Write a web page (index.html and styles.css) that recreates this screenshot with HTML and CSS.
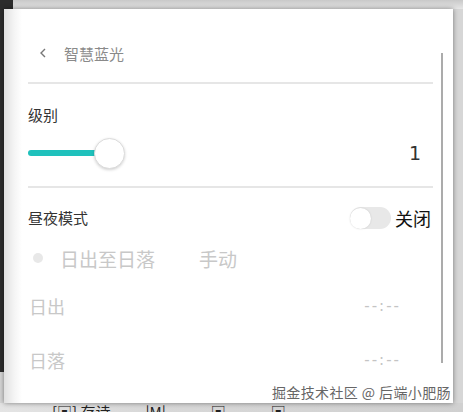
FILE: index.html
```html
<!DOCTYPE html>
<html lang="zh-CN">
<head>
<meta charset="utf-8">
<title>智慧蓝光</title>
<link rel="stylesheet" href="styles.css">
</head>
<body>
<div class="card">
  <div class="main">
    <div class="header">
      <svg class="back" width="8" height="10" viewBox="0 0 8 10"><path d="M6 1 L2 5 L6 9" fill="none" stroke="#777" stroke-width="1.4"/></svg>
      <span class="title">智慧蓝光</span>
    </div>
    <div class="divider"></div>
    <div class="label level">级别</div>
    <div class="slider-row">
      <div class="slider">
        <div class="fill"></div>
        <div class="knob"></div>
      </div>
      <span class="value">1</span>
    </div>
    <div class="divider second"></div>
    <div class="mode-row">
      <span class="label">昼夜模式</span>
      <div class="switch-wrap">
        <div class="switch"><div class="switch-knob"></div></div>
        <span class="switch-text">关闭</span>
      </div>
    </div>
    <div class="radio-row">
      <span class="dot"></span>
      <span class="radio-label">日出至日落</span>
      <span class="radio-label manual">手动</span>
    </div>
    <div class="time-row">
      <span class="time-label">日出</span>
      <span class="time-value">--:--</span>
    </div>
    <div class="time-row sunset">
      <span class="time-label">日落</span>
      <span class="time-value">--:--</span>
    </div>
  </div>
  <div class="scrollbar"></div>
  <div class="watermark">掘金技术社区 @ 后端小肥肠</div>
</div>
<div class="taskbar">
  <span class="frag f1">[▣] 存诗</span>
  <span class="frag f2">|M|</span>
  <span class="frag f3">▣</span>
  <span class="frag f4">▣</span>
</div>
</body>
</html>
```
FILE: styles.css
```css
html, body {
  margin: 0;
  padding: 0;
}
body {
  width: 463px;
  height: 412px;
  overflow: hidden;
  font-family: "Noto Sans CJK SC", "Noto Sans", sans-serif;
  background:
    linear-gradient(#2c2c2c, #2c2c2c) no-repeat 0 0 / 13px 9px,
    linear-gradient(#2c2c2c, #2c2c2c) no-repeat 0 0 / 4px 372px,
    linear-gradient(#c9c9c9, #e6e6e6) no-repeat 13px 0 / 450px 9px,
    #d6d6d6;
}
.card {
  position: relative;
  margin: 9px 0 0 4px;
  width: 449px;
  height: 394px;
  box-sizing: border-box;
  background: linear-gradient(to right, #e0e0e0, #f4f4f4 10px, #fff 18px);
  box-shadow: 0 0 5px rgba(0, 0, 0, 0.45);
  display: flex;
  padding-left: 24px;
}
.main {
  width: 405px;
  display: flex;
  flex-direction: column;
}
.header {
  margin-top: 29px;
  height: 30px;
  margin-bottom: 14px;
  display: flex;
  align-items: center;
}
.back {
  margin-left: 11px;
  display: block;
}
.title {
  margin-left: 17px;
  font-size: 15px;
  color: #8a8a8a;
}
.divider {
  height: 2px;
  background: #e6e6e6;
}
.label {
  font-size: 15px;
  color: #333;
  line-height: 20px;
}
.level {
  margin-top: 21px;
}
.slider-row {
  margin-top: 13px;
  height: 30px;
  display: flex;
  align-items: center;
  justify-content: space-between;
}
.slider {
  display: flex;
  align-items: center;
}
.fill {
  width: 72px;
  height: 6px;
  border-radius: 3px;
  background: #1fc1bc;
}
.knob {
  width: 29px;
  height: 29px;
  margin-left: -6px;
  border-radius: 50%;
  background: #fff;
  border: 1px solid #dcdcdc;
  box-shadow: 0 1px 3px rgba(0, 0, 0, 0.18);
}
.value {
  font-family: "DejaVu Sans", sans-serif;
  font-size: 19px;
  color: #333;
  margin-right: 12px;
}
.second {
  margin-top: 18px;
}
.mode-row {
  margin-top: 15px;
  height: 30px;
  display: flex;
  align-items: center;
  justify-content: space-between;
}
.switch-wrap {
  display: flex;
  align-items: center;
  gap: 4px;
  margin-right: 2px;
}
.switch {
  width: 41px;
  height: 22px;
  border-radius: 11px;
  background: #e8e8e8;
  display: flex;
  align-items: center;
}
.switch-knob {
  width: 21px;
  height: 21px;
  border-radius: 50%;
  background: #fff;
  box-shadow: 0 0 2px rgba(0, 0, 0, 0.15);
}
.switch-text {
  font-size: 18px;
  color: #111;
}
.radio-row {
  margin-top: 10px;
  height: 30px;
  display: flex;
  align-items: center;
}
.dot {
  width: 10px;
  height: 10px;
  border-radius: 50%;
  background: #e8e8e8;
  margin-left: 5px;
}
.radio-label {
  margin-left: 17px;
  font-size: 19px;
  color: #c8c8c8;
}
.manual {
  margin-left: 44px;
}
.time-row {
  margin-top: 18px;
  height: 30px;
  display: flex;
  align-items: center;
  justify-content: space-between;
}
.sunset {
  margin-top: 24px;
}
.time-label {
  font-size: 18px;
  color: #c8c8c8;
  margin-left: 1px;
}
.time-value {
  font-family: "DejaVu Sans", sans-serif;
  font-size: 15px;
  letter-spacing: 2px;
  color: #c4c4c4;
  margin-right: 32px;
}
.scrollbar {
  width: 2px;
  height: 310px;
  margin-top: 44px;
  margin-left: 8px;
  background: #ababab;
}
.watermark {
  position: absolute;
  right: 2px;
  bottom: 1px;
  font-size: 14px;
  letter-spacing: 0.4px;
  color: #666;
  text-shadow: 0 0 2px #fff, 0 0 2px #fff;
  line-height: 20px;
}
.taskbar {
  height: 9px;
  overflow: hidden;
  display: flex;
  align-items: flex-start;
  background: linear-gradient(to right, #e4e4e4, #d8d8d8 150px, #d0d0d0);
}
.frag {
  font-size: 15px;
  line-height: 15px;
  color: #222;
  margin-top: 1px;
  white-space: nowrap;
}
.f1 { margin-left: 52px; }
.f2 { margin-left: 35px; }
.f3 { margin-left: 45px; }
.f4 { margin-left: 45px; }
```
